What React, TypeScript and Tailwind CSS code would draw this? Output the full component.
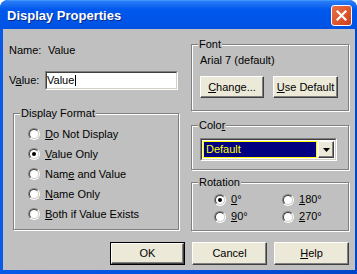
import React from "react";

const U = ({ children }: { children: React.ReactNode }) => (
  <span className="underline underline-offset-[1px] decoration-1">{children}</span>
);

function Radio({ checked }: { checked?: boolean }) {
  return (
    <span className="w-[12px] h-[12px] rounded-full border border-t-[#808080] border-l-[#808080] border-r-white border-b-white flex shrink-0">
      <span className="flex-1 rounded-full border border-t-[#404040] border-l-[#404040] border-r-[#d4d0c8] border-b-[#d4d0c8] bg-white flex items-center justify-center">
        {checked && <span className="w-[4px] h-[4px] rounded-full bg-black" />}
      </span>
    </span>
  );
}

function Group({
  label,
  className,
  children,
}: {
  label: React.ReactNode;
  className: string;
  children?: React.ReactNode;
}) {
  return (
    <div
      className={
        "relative border border-[#808080] shadow-[inset_1px_1px_0_#fff,1px_1px_0_#fff] " +
        className
      }
    >
      <span className="absolute left-[6px] -top-[7px] bg-[#c0c0c0] px-[1px] leading-[13px]">
        {label}
      </span>
      {children}
    </div>
  );
}

function Btn({ className, children }: { className: string; children: React.ReactNode }) {
  return (
    <div
      className={
        "bg-[#ece9d8] border border-t-white border-l-white border-r-[#404040] border-b-[#404040] shadow-[inset_-1px_-1px_0_#808080] flex items-center justify-center " +
        className
      }
    >
      {children}
    </div>
  );
}

function RadioRow({ checked, children }: { checked?: boolean; children: React.ReactNode }) {
  return (
    <div className="h-[20px] flex items-center gap-[5px]">
      <Radio checked={checked} />
      <span>{children}</span>
    </div>
  );
}

function RotRow({ checked, children }: { checked?: boolean; children: React.ReactNode }) {
  return (
    <div className="h-[17px] flex items-center gap-[5px]">
      <Radio checked={checked} />
      <span>{children}</span>
    </div>
  );
}

export default function App() {
  return (
    <div className="w-[357px] h-[274px] flex flex-col bg-[#0052e0] rounded-t-[8px] overflow-hidden font-['Liberation_Sans',Arial,sans-serif] text-[11px] leading-[13px] text-black">
      <div className="h-[29px] shrink-0 flex pl-[7px] pr-[5px] bg-gradient-to-b from-[#2a7ef6] via-[#0058ee] via-30% to-[#0052e2] border-t border-[#3d95ff]">
        <span className="self-center mt-[1px] text-white font-bold text-[13px] leading-[16px] [text-shadow:1px_1px_0_#0a2a8a]">
          Display Properties
        </span>
        <div className="ml-auto mt-[4px] w-[21px] h-[21px] rounded-[3px] border border-white bg-gradient-to-br from-[#e8704a] via-[#e0582e] to-[#c8401c] flex items-center justify-center">
          <svg width="11" height="11" viewBox="0 0 11 11">
            <path d="M1.5 1.5 L9.5 9.5 M9.5 1.5 L1.5 9.5" stroke="white" strokeWidth="2.2" strokeLinecap="square" />
          </svg>
        </div>
      </div>
      <div className="flex-1 flex pl-[3px] pr-[4px] pb-[4px] bg-gradient-to-r from-[#0a5ae8] via-[#0052e0] to-[#0046c8]">
        <div className="flex-1 bg-[#c0c0c0] flex flex-col pl-[6px] pr-[6px]">
          <div className="flex">
            {/* left column */}
            <div className="w-[170px] flex flex-col">
              <div className="mt-[15px] h-[13px] flex">
                <span className="w-[39px]">Name:</span>
                <span>Value</span>
              </div>
              <div className="mt-[14px] h-[19px] flex items-center">
                <span className="w-[36px]">
                  V<U>a</U>lue:
                </span>
                <div className="w-[133px] h-[19px] border border-t-[#808080] border-l-[#808080] border-r-white border-b-white flex">
                  <div className="flex-1 border border-t-[#404040] border-l-[#404040] border-r-[#d4d0c8] border-b-[#d4d0c8] bg-white flex items-center">
                    <span>Value</span>
                    <span className="w-[1px] h-[11px] bg-black ml-[1px]" />
                  </div>
                </div>
              </div>
              <Group label="Display Format" className="mt-[23px] ml-[4px] w-[166px] h-[117px]">
                <div className="flex flex-col pt-[10px] pl-[14px]">
                  <RadioRow>
                    <U>D</U>o Not Display
                  </RadioRow>
                  <RadioRow checked>
                    <U>V</U>alue Only
                  </RadioRow>
                  <RadioRow>
                    Nam<U>e</U> and Value
                  </RadioRow>
                  <RadioRow>
                    <U>N</U>ame Only
                  </RadioRow>
                  <RadioRow>
                    <U>B</U>oth if Value Exists
                  </RadioRow>
                </div>
              </Group>
            </div>
            {/* right column */}
            <div className="ml-[12px] w-[158px] flex flex-col">
              <Group label="Font" className="mt-[15px] h-[67px]">
                <div className="pt-[9px] pl-[8px] flex flex-col">
                  <span className="h-[13px]">Arial 7 (default)</span>
                  <div className="mt-[9px] flex gap-[9px]">
                    <Btn className="w-[64px] h-[22px]">
                      <span>
                        <U>C</U>hange...
                      </span>
                    </Btn>
                    <Btn className="w-[65px] h-[22px]">
                      <span>
                        <U>U</U>se Default
                      </span>
                    </Btn>
                  </div>
                </div>
              </Group>
              <Group
                label={
                  <span>
                    Colo<U>r</U>
                  </span>
                }
                className="mt-[14px] h-[45px]"
              >
                <div className="pt-[12px] pl-[8px]">
                  <div className="w-[137px] h-[23px] border border-t-[#808080] border-l-[#808080] border-r-white border-b-white flex">
                    <div className="flex-1 border border-t-[#404040] border-l-[#404040] border-r-[#d4d0c8] border-b-[#d4d0c8] bg-white flex p-[1px] gap-[1px]">
                      <div className="flex-1 bg-[#000080] border border-[#ffff00] text-[#ffff00] flex items-center pl-[2px]">
                        Default
                      </div>
                      <Btn className="w-[16px] h-full">
                        <svg width="7" height="4" viewBox="0 0 7 4">
                          <path d="M0 0 H7 L3.5 4 Z" fill="black" />
                        </svg>
                      </Btn>
                    </div>
                  </div>
                </div>
              </Group>
              <Group label="Rotation" className="mt-[12px] h-[49px]">
                <div className="pt-[8px] pl-[22px] grid grid-cols-[68px_68px]">
                  <RotRow checked>
                    <U>0</U>°
                  </RotRow>
                  <RotRow>
                    <U>1</U>80°
                  </RotRow>
                  <RotRow>
                    <U>9</U>0°
                  </RotRow>
                  <RotRow>
                    <U>2</U>70°
                  </RotRow>
                </div>
              </Group>
            </div>
          </div>
          <div className="mt-[11px] flex justify-end gap-[7px]">
            <div className="w-[75px] h-[23px] border border-black flex">
              <Btn className="flex-1">OK</Btn>
            </div>
            <Btn className="w-[75px] h-[23px]">Cancel</Btn>
            <Btn className="w-[75px] h-[23px]">
              <span>
                <U>H</U>elp
              </span>
            </Btn>
          </div>
        </div>
      </div>
    </div>
  );
}
